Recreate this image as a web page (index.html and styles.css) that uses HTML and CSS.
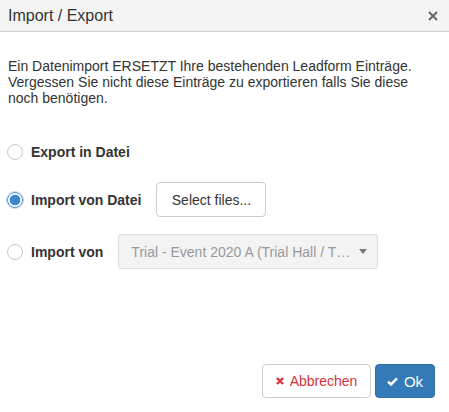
FILE: index.html
```html
<!DOCTYPE html>
<html lang="de">
<head>
  <meta charset="UTF-8">
  <title>Import / Export</title>
  <link rel="stylesheet" href="styles.css">
</head>
<body>
  <div class="dialog">
    <div class="titlebar">
      <span class="title">Import / Export</span>
      <svg class="close" width="10" height="10" viewBox="0 0 10 10">
        <path d="M1 1 L9 9 M9 1 L1 9" stroke="#666" stroke-width="2"/>
      </svg>
    </div>

    <div class="content">
      <p class="note">Ein Datenimport ERSETZT Ihre bestehenden Leadform Einträge. Vergessen Sie nicht diese Einträge zu exportieren falls Sie diese noch benötigen.</p>

      <div class="option first">
        <span class="radio"></span>
        <span class="label">Export in Datei</span>
      </div>

      <div class="option second">
        <span class="radio checked"></span>
        <span class="label">Import von Datei</span>
        <span class="btn select-files">Select files...</span>
      </div>

      <div class="option third">
        <span class="radio"></span>
        <span class="label">Import von</span>
        <span class="dropdown">
          <span class="dropdown-text">Trial - Event 2020 A (Trial Hall / T…</span>
          <span class="caret"></span>
        </span>
      </div>
    </div>

    <div class="actions">
      <span class="btn cancel">
        <svg width="8" height="8" viewBox="0 0 8 8">
          <path d="M1 1 L7 7 M7 1 L1 7" stroke="#d9363e" stroke-width="2.4"/>
        </svg>
        Abbrechen
      </span>
      <span class="btn ok">
        <svg width="11" height="9" viewBox="0 0 11 9">
          <path d="M1 4.6 L4 7.4 L10 1.4" stroke="#fff" stroke-width="2.6" fill="none"/>
        </svg>
        Ok
      </span>
    </div>
  </div>
</body>
</html>
```

FILE: styles.css
```css
html, body {
  margin: 0;
  height: 100%;
}
body {
  background: #fff;
  color: #333;
  font-family: "Liberation Sans", Arial, sans-serif;
  font-size: 14px;
}
.dialog {
  display: flex;
  flex-direction: column;
  height: 100%;
}
.titlebar {
  height: 31px;
  display: flex;
  align-items: center;
  justify-content: space-between;
  padding: 0 11px 0 8px;
  background: #f4f4f4;
  border-bottom: 1px solid #d0d0d0;
}
.title {
  font-size: 16px;
  color: #333;
}
.content {
  flex: 1;
  padding: 26px 8px 0 8px;
}
.note {
  margin: 0;
  line-height: 16px;
}
.option {
  display: flex;
  align-items: center;
  height: 35px;
}
.option.first {
  margin-top: 28px;
}
.option.second {
  margin-top: 13px;
}
.option.third {
  margin-top: 17px;
}
.radio {
  box-sizing: border-box;
  width: 16px;
  height: 16px;
  margin-left: -1px;
  margin-right: 8px;
  border: 1px solid #c8c8c8;
  border-radius: 50%;
  background: #fff;
}
.radio.checked {
  border-color: #4b8fd4;
  box-shadow: 0 0 0 1px #c6dcf2;
  background: radial-gradient(circle, #3d87d0 0, #3d87d0 5px, #fff 5.6px);
}
.label {
  font-weight: bold;
  margin-right: 15px;
}
.btn {
  box-sizing: border-box;
  display: inline-flex;
  align-items: center;
  justify-content: center;
  border: 1px solid #ccc;
  border-radius: 4px;
  background: #fff;
}
.select-files {
  width: 110px;
  height: 35px;
}
.dropdown {
  box-sizing: border-box;
  display: flex;
  align-items: center;
  width: 260px;
  height: 35px;
  padding: 0 10px 0 12px;
  background: #f3f3f3;
  border: 1px solid #ddd;
  border-radius: 3px;
  color: #999;
}
.dropdown-text {
  flex: 1;
  white-space: nowrap;
}
.caret {
  width: 0;
  height: 0;
  border-left: 4px solid transparent;
  border-right: 4px solid transparent;
  border-top: 5px solid #777;
}
.actions {
  display: flex;
  justify-content: flex-end;
  gap: 4px;
  padding: 0 14px 14px 0;
}
.actions .btn {
  height: 34px;
  gap: 6px;
}
.cancel {
  width: 109px;
  color: #d6333c;
}
.ok {
  width: 60px;
  gap: 4px;
  background: #337ab7;
  border-color: #2e6da4;
  color: #fff;
  font-size: 15px;
}
```
